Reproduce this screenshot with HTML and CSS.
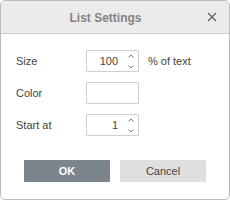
FILE: index.html
```html
<!DOCTYPE html>
<html>
<head>
<meta charset="utf-8">
<link rel="stylesheet" href="styles.css">
</head>
<body>
<div class="dialog">
  <div class="header">
    <div class="title">List Settings</div>
    <svg class="close" width="10" height="10" viewBox="0 0 10 10"><path d="M1 1L9 9M9 1L1 9" stroke="#6e6e6e" stroke-width="1.6" fill="none"/></svg>
  </div>
  <div class="body">
    <div class="row">
      <span class="label">Size</span>
      <div class="spin"><span class="val">100</span>
        <span class="arrows">
          <svg width="6" height="4" viewBox="0 0 6 4"><path d="M0.5 3.5L3 1L5.5 3.5" stroke="#7a7a7a" fill="none"/></svg>
          <svg width="6" height="4" viewBox="0 0 6 4"><path d="M0.5 0.5L3 3L5.5 0.5" stroke="#7a7a7a" fill="none"/></svg>
        </span>
      </div>
      <span class="unit">% of text</span>
    </div>
    <div class="row">
      <span class="label">Color</span>
      <div class="color"></div>
    </div>
    <div class="row start">
      <span class="label">Start at</span>
      <div class="spin"><span class="val">1</span>
        <span class="arrows">
          <svg width="6" height="4" viewBox="0 0 6 4"><path d="M0.5 3.5L3 1L5.5 3.5" stroke="#7a7a7a" fill="none"/></svg>
          <svg width="6" height="4" viewBox="0 0 6 4"><path d="M0.5 0.5L3 3L5.5 0.5" stroke="#7a7a7a" fill="none"/></svg>
        </span>
      </div>
    </div>
    <div class="buttons">
      <div class="btn ok">OK</div>
      <div class="btn cancel">Cancel</div>
    </div>
  </div>
</div>
</body>
</html>
```
FILE: styles.css
```css
html, body { margin: 0; padding: 0; background: #fff; }
body { font-family: "Liberation Sans", Arial, sans-serif; font-size: 11px; color: #444; }
.dialog {
  width: 230px; height: 200px; box-sizing: border-box;
  border: 1px solid #bcbcbc; border-radius: 5px; overflow: hidden; background: #fff;
}
.header {
  height: 32px; background: #ebebeb; border-bottom: 1px solid #cbcbcb;
  display: flex; align-items: center; position: relative;
}
.title {
  flex: 1; text-align: center; font-weight: bold; font-size: 12px; color: #848484;
  padding-right: 19px; padding-top: 1px;
}
.close { position: absolute; left: 206px; top: 11px; }
.body { padding: 16px 0 0 15px; }
.row { display: flex; align-items: center; height: 22px; margin-bottom: 10px; }
.row.start { margin-top: 1px; }
.label { width: 70px; }
.spin, .color {
  width: 53px; height: 22px; box-sizing: border-box; border: 1px solid #cfcfcf; border-radius: 1px;
}
.spin { display: flex; align-items: center; justify-content: flex-end; }
.val { color: #444; margin-right: 6px; }
.arrows { display: flex; flex-direction: column; justify-content: space-between; height: 15px; width: 14px; align-items: center; margin-right: 0px; }
.arrows svg { display: block; }
.unit { margin-left: 9px; }
.buttons { display: flex; gap: 10px; margin-top: 24px; margin-left: 8px; }
.btn {
  width: 86px; height: 22px; display: flex; align-items: center; justify-content: center;
  border-radius: 1px; font-size: 11px;
}
.ok { background: #7d858c; color: #fff; font-weight: bold; }
.cancel { background: #dfdfdf; color: #444; }
```
